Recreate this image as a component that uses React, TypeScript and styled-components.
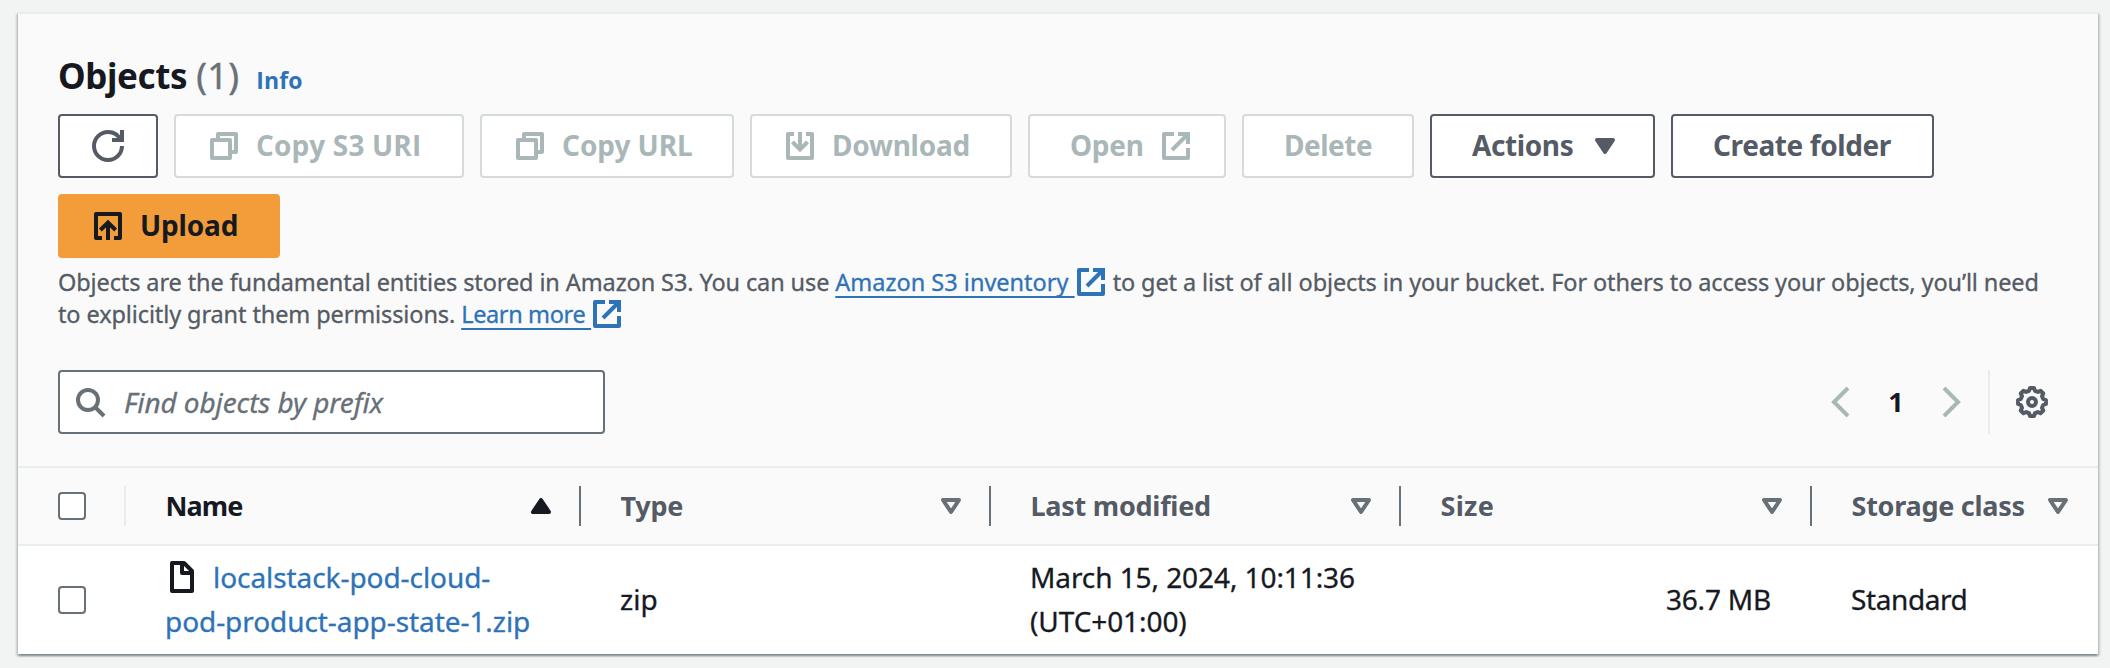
import React from 'react';
import styled, { createGlobalStyle } from 'styled-components';

const color = {
  text: '#16191f',
  secondary: '#545b64',
  muted: '#687078',
  disabled: '#aab7b8',
  disabledBorder: '#d5dbdb',
  link: '#2e73b8',
  divider: '#eaeded',
  panel: '#fafafa',
  accent: '#f29d39',
};

const sans = "'Noto Sans', 'Open Sans', sans-serif";
const plainSans = "'Open Sans', 'Noto Sans', sans-serif";

const GlobalStyle = createGlobalStyle`
  *, *::before, *::after { box-sizing: border-box; }
  body {
    margin: 0;
    background: #f2f3f3;
    color: ${color.text};
    font-family: ${sans};
    font-size: 28px;
  }
`;

const Page = styled.main`
  height: 668px;
  padding: 12px 12px 14px 18px;
  overflow: hidden;
`;

const Card = styled.section`
  height: 642px;
  border-top: 2px solid ${color.divider};
  background: #fff;
  box-shadow:
    0 2px 2px 0 rgba(0, 28, 36, 0.3),
    2px 2px 2px 0 rgba(0, 28, 36, 0.15),
    -2px 2px 2px 0 rgba(0, 28, 36, 0.15);
`;

const CardHeader = styled.header`
  height: 452px;
  padding: 40px 40px 0;
  background: ${color.panel};
`;

const TitleRow = styled.div`
  display: flex;
  align-items: baseline;
  height: 44px;
  line-height: 44px;
`;

const Title = styled.h2`
  margin: 0;
  font-size: 35px;
  line-height: 44px;
  font-weight: 700;
  letter-spacing: -0.4px;
`;

const Count = styled.span`
  margin-left: 9px;
  font-size: 36px;
  color: ${color.muted};
  letter-spacing: 0.3px;
  -webkit-text-stroke: 0.4px currentColor;
`;

const InfoLink = styled.a`
  margin-left: 17px;
  font-family: ${plainSans};
  font-size: 23px;
  font-weight: 700;
  letter-spacing: 0.1px;
  color: ${color.link};
`;

const Toolbar = styled.div`
  display: flex;
  flex-wrap: wrap;
  gap: 16px;
  margin-top: 16px;
`;

type Tone = 'normal' | 'disabled' | 'primary';

const Button = styled.button<{ $width: number; $tone?: Tone; $spacing?: number; $plain?: boolean }>`
  display: flex;
  align-items: center;
  justify-content: flex-start;
  gap: 16px;
  width: ${(p) => p.$width}px;
  height: 64px;
  padding: 0 40px;
  border: 2px solid
    ${(p) => (p.$tone === 'disabled' ? color.disabledBorder : p.$tone === 'primary' ? color.accent : color.secondary)};
  border-radius: 4px;
  background: ${(p) => (p.$tone === 'primary' ? color.accent : '#fff')};
  color: ${(p) => (p.$tone === 'disabled' ? color.disabled : p.$tone === 'primary' ? color.text : color.secondary)};
  font-family: ${(p) => (p.$plain ? plainSans : sans)};
  font-size: 28px;
  font-weight: 700;
  line-height: 40px;
  letter-spacing: ${(p) => p.$spacing ?? 0}px;
  white-space: nowrap;

  svg:first-child { margin-left: -8px; }
`;

const Label = styled.span`
  padding-bottom: 2px;
`;

const Svg = styled.svg`
  flex: none;
  width: 32px;
  height: 32px;
  overflow: visible;
  fill: none;
  stroke: currentColor;
  stroke-width: 2;
`;

const Description = styled.p`
  margin: 8px 0 0;
  height: 64px;
  color: ${color.secondary};
  font-size: 23.5px;
  line-height: 32px;
  letter-spacing: -0.11px;
  white-space: nowrap;
  -webkit-text-stroke: 0.3px currentColor;
`;

const ExternalLink = styled.a<{ $spacing: number }>`
  color: ${color.link};
  letter-spacing: ${(p) => p.$spacing}px;

  svg {
    margin: -4px 0;
    vertical-align: -3px;
  }
`;

const Underlined = styled.span`
  text-decoration: underline;
  text-decoration-thickness: 2px;
  text-underline-offset: 5px;
  text-decoration-skip-ink: none;
`;

const FilterRow = styled.div`
  display: flex;
  align-items: center;
  justify-content: space-between;
  height: 64px;
  margin-top: 40px;
`;

const SearchField = styled.div`
  display: flex;
  align-items: center;
  gap: 18px;
  width: 547px;
  height: 64px;
  padding: 0 14px;
  border: 2px solid ${color.muted};
  border-radius: 4px;
  background: #fff;
  color: ${color.muted};
`;

const Placeholder = styled.span`
  font-style: italic;
  letter-spacing: -0.1px;
  -webkit-text-stroke: 0.3px currentColor;
`;

const Pagination = styled.div`
  display: flex;
  align-items: center;
  height: 64px;
  padding-right: 10px;
  color: ${color.disabled};
`;

const PageNumber = styled.span`
  width: 80px;
  padding-bottom: 1px;
  text-align: center;
  font-weight: 700;
  font-size: 27px;
  color: ${color.text};
`;

const SettingsArea = styled.div`
  display: flex;
  align-items: center;
  height: 64px;
  margin-left: 20px;
  padding-left: 26px;
  border-left: 2px solid ${color.divider};
  color: ${color.secondary};
`;

const Row = styled.div`
  display: grid;
  grid-template-columns: 108px 455px 410px 410px 411px 286px;
`;

const HeadRow = styled(Row)`
  height: 80px;
  border-top: 2px solid ${color.divider};
  border-bottom: 2px solid ${color.divider};
  background: ${color.panel};
`;

const BodyRow = styled(Row)`
  height: 108px;
`;

const HeadCell = styled.div<{ $active?: boolean; $spacing: number }>`
  display: flex;
  align-items: center;
  padding: 0 0 0 40px;
  font-size: 27px;
  font-weight: 700;
  letter-spacing: ${(p) => p.$spacing}px;
  color: ${(p) => (p.$active ? color.text : color.secondary)};
  white-space: nowrap;

  svg {
    margin-left: auto;
    margin-right: 24px;
    color: ${(p) => (p.$active ? color.text : color.muted)};
  }
`;

const HeadLabel = styled.span`
  margin-left: -0.5px;
  padding-bottom: 1px;
`;

const Separator = styled.span<{ $light?: boolean }>`
  flex: none;
  width: 2px;
  height: 40px;
  margin-left: ${(p) => (p.$light ? 'auto' : '-2px')};
  background: ${(p) => (p.$light ? color.divider : color.muted)};
`;

const SelectCell = styled.div`
  display: flex;
  align-items: center;
  padding-left: 40px;
`;

const Checkbox = styled.span`
  width: 28px;
  height: 28px;
  border: 2px solid ${color.muted};
  border-radius: 4px;
  background: #fff;
`;

const Cell = styled.div<{ $right?: boolean; $spacing?: number }>`
  display: flex;
  flex-direction: column;
  justify-content: center;
  align-items: ${(p) => (p.$right ? 'flex-end' : 'flex-start')};
  padding: 0 41px 2px 39px;
  line-height: 44px;
  letter-spacing: ${(p) => p.$spacing ?? 0}px;
  white-space: nowrap;
  -webkit-text-stroke: 0.3px currentColor;
`;

const FileLink = styled.a`
  color: ${color.link};
`;

const FileLine = styled.span`
  display: flex;
  align-items: center;
  gap: 15px;
  height: 44px;
  padding-left: 1px;
`;

const CopyIcon = () => (
  <Svg viewBox="0 0 16 16" strokeLinejoin="round">
    <path d="M2 5h9v9H2z" />
    <path d="M5 5V2h9v9h-3" />
  </Svg>
);

const RefreshIcon = () => (
  <Svg viewBox="0 0 16 16">
    <path d="M10 5h5V0" />
    <path d="M15 8c0 3.87-3.13 7-7 7s-7-3.13-7-7 3.13-7 7-7c2.79 0 5.2 1.63 6.33 4" />
  </Svg>
);

const DownloadIcon = () => (
  <Svg viewBox="0 0 16 16">
    <path strokeLinejoin="round" d="M5 2H2v12h12V2h-3" />
    <path d="M8 1v8.5M4.2 6 8 9.7 11.8 6" />
  </Svg>
);

const UploadIcon = () => (
  <Svg viewBox="0 0 16 16">
    <path strokeLinejoin="round" d="M5 14H2V2h12v12h-3" />
    <path d="M8 15V6.5M4.2 10 8 6.3l3.8 3.7" />
  </Svg>
);

const ExternalIcon = () => (
  <Svg viewBox="0 0 16 16">
    <path strokeLinejoin="round" d="M14 9v5H2V2h5" />
    <path d="M9 2h5v5M6 10l8-8" />
  </Svg>
);

const CaretIcon = ({ up, filled }: { up?: boolean; filled?: boolean }) => (
  <Svg viewBox="0 0 16 16" strokeLinejoin="round">
    <path d={up ? 'M4 11h8L8 5z' : 'M4 5h8l-4 6z'} fill={filled ? 'currentColor' : 'none'} />
  </Svg>
);

const SearchIcon = () => (
  <Svg viewBox="0 0 16 16">
    <circle cx="7" cy="7" r="5" />
    <path d="m15 15-4.5-4.5" />
  </Svg>
);

const ChevronIcon = ({ right }: { right?: boolean }) => (
  <Svg viewBox="0 0 16 16">
    <path d={right ? 'm4 1 7 7-7 7' : 'M12 1 5 8l7 7'} />
  </Svg>
);

const FileIcon = () => (
  <Svg viewBox="0 0 16 16" strokeLinejoin="round" color={color.text}>
    <path d="M3 1h6l4 4v10H3z" />
    <path d="M8 1v5h5" />
  </Svg>
);

// Eight-tooth outline: each tooth is two outer points followed by two valley points.
const gearPath =
  Array.from({ length: 8 }, (_, tooth) =>
    [
      [7.05, -8],
      [7.05, 8],
      [5.8, 15],
      [5.8, 30],
    ].map(([radius, offset]) => {
      const angle = ((tooth * 45 + offset) * Math.PI) / 180;
      return `${(8 + radius * Math.cos(angle)).toFixed(2)} ${(8 + radius * Math.sin(angle)).toFixed(2)}`;
    }),
  )
    .flat()
    .reduce((path, point, i) => path + (i ? 'L' : 'M') + point, '') + 'Z';

const GearIcon = () => (
  <Svg viewBox="0 0 16 16" strokeLinejoin="round">
    <path d={gearPath} />
    <circle cx="8" cy="8" r="2" />
  </Svg>
);

export default function App() {
  return (
    <>
      <GlobalStyle />
      <Page>
        <Card>
          <CardHeader>
            <TitleRow>
              <Title>Objects</Title>
              <Count>(1)</Count>
              <InfoLink>Info</InfoLink>
            </TitleRow>
            <Toolbar>
              <Button $width={100} aria-label="Refresh">
                <RefreshIcon />
              </Button>
              <Button $width={290} $tone="disabled" $plain $spacing={0.15}>
                <CopyIcon />
                <Label>Copy S3 URI</Label>
              </Button>
              <Button $width={254} $tone="disabled" $spacing={-0.06}>
                <CopyIcon />
                <Label>Copy URL</Label>
              </Button>
              <Button $width={262} $tone="disabled" $spacing={-0.25}>
                <DownloadIcon />
                <Label>Download</Label>
              </Button>
              <Button $width={198} $tone="disabled" $spacing={-0.3}>
                <Label>Open</Label>
                <ExternalIcon />
              </Button>
              <Button $width={172} $tone="disabled" $spacing={-0.5}>
                <Label>Delete</Label>
              </Button>
              <Button $width={225} $spacing={-0.4}>
                <Label>Actions</Label>
                <CaretIcon filled />
              </Button>
              <Button $width={263} $spacing={-0.4}>
                <Label>Create folder</Label>
              </Button>
              <Button $width={222} $tone="primary" $spacing={-0.15}>
                <UploadIcon />
                <Label>Upload</Label>
              </Button>
            </Toolbar>
            <Description>
              Objects are the fundamental entities stored in Amazon S3. You can use{' '}
              <ExternalLink $spacing={0}>
                <Underlined>Amazon S3 inventory </Underlined>
                <ExternalIcon />
              </ExternalLink>{' '}
              to get a list of all objects in your bucket. For others to access your objects, you’ll need
              <br />
              to explicitly grant them permissions.{' '}
              <ExternalLink $spacing={-0.36}>
                <Underlined>Learn more </Underlined>
                <ExternalIcon />
              </ExternalLink>
            </Description>
            <FilterRow>
              <SearchField>
                <SearchIcon />
                <Placeholder>Find objects by prefix</Placeholder>
              </SearchField>
              <Pagination>
                <ChevronIcon />
                <PageNumber>1</PageNumber>
                <ChevronIcon right />
                <SettingsArea>
                  <GearIcon />
                </SettingsArea>
              </Pagination>
            </FilterRow>
          </CardHeader>
          <HeadRow>
            <SelectCell>
              <Checkbox />
              <Separator $light />
            </SelectCell>
            <HeadCell $active $spacing={-0.9}>
              <HeadLabel>Name</HeadLabel>
              <CaretIcon up filled />
              <Separator />
            </HeadCell>
            <HeadCell $spacing={-0.25}>
              <HeadLabel>Type</HeadLabel>
              <CaretIcon />
              <Separator />
            </HeadCell>
            <HeadCell $spacing={-0.25}>
              <HeadLabel>Last modified</HeadLabel>
              <CaretIcon />
              <Separator />
            </HeadCell>
            <HeadCell $spacing={0.3}>
              <HeadLabel>Size</HeadLabel>
              <CaretIcon />
              <Separator />
            </HeadCell>
            <HeadCell $spacing={-0.25}>
              <HeadLabel>Storage class</HeadLabel>
              <CaretIcon />
            </HeadCell>
          </HeadRow>
          <BodyRow>
            <SelectCell>
              <Checkbox />
            </SelectCell>
            <Cell $spacing={-0.07}>
              <FileLine>
                <FileIcon />
                <FileLink>localstack-pod-cloud-</FileLink>
              </FileLine>
              <FileLink>pod-product-app-state-1.zip</FileLink>
            </Cell>
            <Cell>zip</Cell>
            <Cell $spacing={-0.08}>
              <span>March 15, 2024, 10:11:36</span>
              <span>(UTC+01:00)</span>
            </Cell>
            <Cell $right $spacing={-0.2}>36.7 MB</Cell>
            <Cell $spacing={-0.4}>Standard</Cell>
          </BodyRow>
        </Card>
      </Page>
    </>
  );
}
